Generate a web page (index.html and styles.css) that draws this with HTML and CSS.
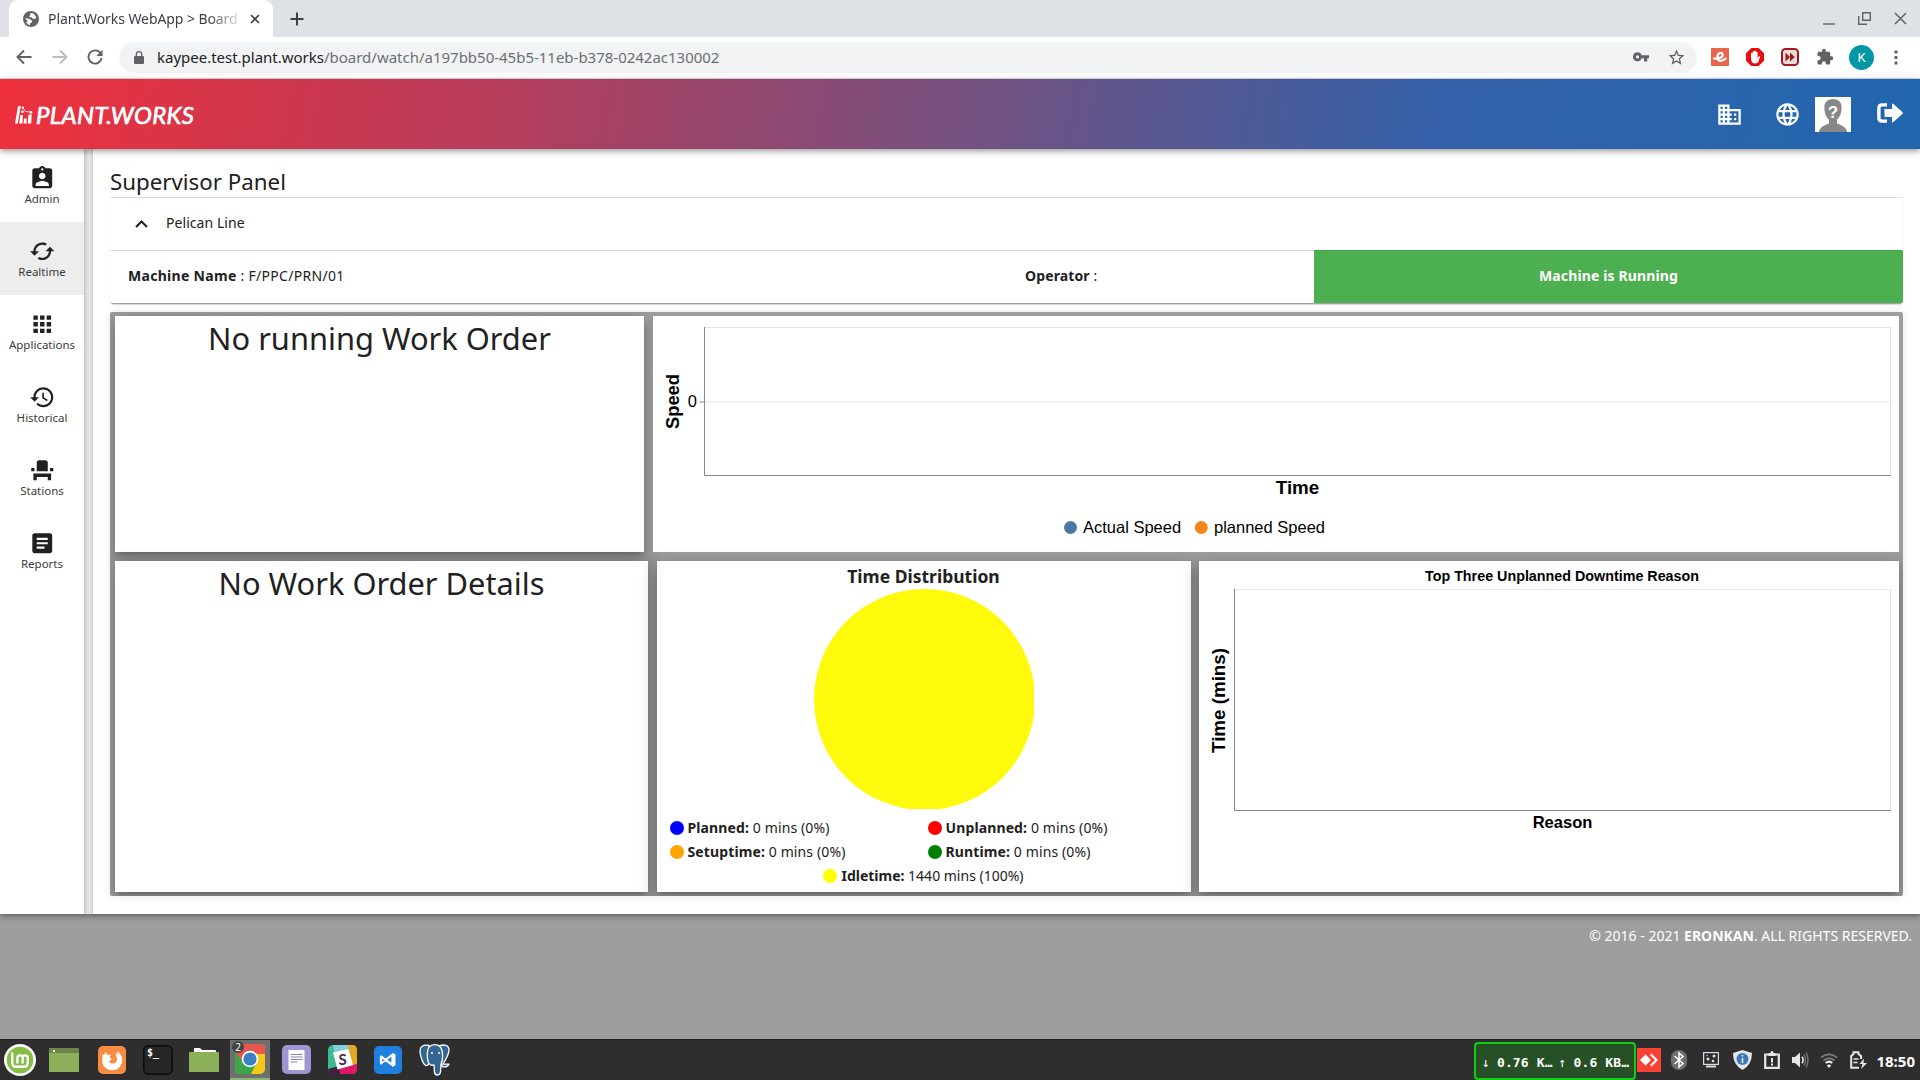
FILE: index.html
```html
<!DOCTYPE html>
<html lang="en">
<head>
<meta charset="utf-8">
<title>Plant.Works WebApp &gt; Board</title>
<link rel="stylesheet" href="styles.css">
</head>
<body>
<div class="screen">

<div class="tabstrip">
  <div class="tab">
    <svg class="tab-icon" viewBox="0 0 16 16"><circle cx="8" cy="8" r="8" fill="#5f6368"/><path d="M7 2.5 9.5 2l2 1.5 1.8 3-1.3 1.6-2-.2-1.2-1.6-2 .3-.6-1.5 1.3-.6zM2 7l3 .6 2.4 1 1.8 1.2-.6 1.7-1.4.7-.5 2L4.500 13 3 11l2-.5z" fill="#fff"/></svg>
    <span class="tab-title">Plant.Works WebApp &gt; Board</span>
    <svg class="tab-close" viewBox="0 0 10 10"><path d="M1 1l8 8M9 1 1 9" stroke="#3c4043" stroke-width="1.7"/></svg>
  </div>
  <svg class="new-tab" viewBox="0 0 14 14"><path d="M7 .5v13M.5 7h13" stroke="#3c4043" stroke-width="2"/></svg>
  <div class="window-buttons">
    <svg width="12" height="14" viewBox="0 0 12 14"><path d="M0 12h12" stroke="#5f6368" stroke-width="1.4"/></svg>
    <svg width="13" height="13" viewBox="0 0 13 13" fill="none" stroke="#5f6368" stroke-width="1.4"><path d="M4.700.7h7.600v7.600H4.700zM.7 4v8.300H9"/></svg>
    <svg width="13" height="13" viewBox="0 0 13 13"><path d="M1 1l11 11M12 1 1 12" stroke="#5f6368" stroke-width="1.5"/></svg>
  </div>
</div>

<div class="toolbar">
  <svg class="nav back" viewBox="0 0 16 16"><path d="M15.500 8H2M8 1.500 1.500 8 8 14.500"/></svg>
  <svg class="nav forward" viewBox="0 0 16 16"><path d="M.5 8H14M8 1.500 14.500 8 8 14.500"/></svg>
  <svg class="nav reload" viewBox="0 0 16 16"><path d="M13.700 4.500A6.600 6.600 0 1 0 14.600 9"/><path d="M15.500.8v6.200H9.300z" fill="#5f6368" stroke="none"/></svg>
  <div class="omnibox">
    <svg class="lock" viewBox="0 0 10 13"><path d="M1 5h8q1 0 1 1v6q0 1-1 1H1q-1 0-1-1V6q0-1 1-1z" fill="#5f6368"/><path d="M2.300 5.500V3.400a2.700 2.700 0 0 1 5.400 0v2.100" fill="none" stroke="#5f6368" stroke-width="1.300"/></svg>
    <span class="url"><b>kaypee.test.plant.works</b>/board/watch/a197bb50-45b5-11eb-b378-0242ac130002</span>
    <svg class="key" viewBox="0 0 16 10"><path d="M4.500.3a4.500 4.500 0 1 0 4.200 6H11v3.200h3.200V6.300H16v-3H8.700A4.500 4.500 0 0 0 4.500.3zm0 3a1.600 1.600 0 1 1 0 3.200 1.600 1.600 0 0 1 0-3.200z" fill="#5f6368" fill-rule="evenodd"/></svg>
    <svg class="star" viewBox="0 0 24 24"><path d="M22 9.240l-7.190-.62L12 2 9.190 8.630 2 9.240l5.460 4.730L5.820 21 12 17.270 18.180 21l-1.630-7.030L22 9.240zM12 15.400l-3.760 2.270 1-4.280-3.320-2.880 4.380-.38L12 6.100l1.710 4.040 4.380.38-3.320 2.880 1 4.280L12 15.400z" fill="#5f6368"/></svg>
  </div>
  <div class="extensions">
    <svg width="18" height="18" viewBox="0 0 18 18"><rect width="18" height="18" rx="1" fill="#e8674c"/><path d="M3 10.500c4.500.6 9-1.200 8.600-4.200-.4-2.600-5-1.600-5.200 2.600-.2 4.800 4.300 5 8.100 1.800" fill="none" stroke="#fff" stroke-width="2.200" stroke-linecap="round"/></svg>
    <svg width="18" height="18" viewBox="0 0 18 18"><path d="M5.300 0h7.400L18 5.300v7.400L12.700 18H5.300L0 12.700V5.300z" fill="#e90d10"/><path d="M5 9V5.200q.9-.9 1.600 0V3.600q.9-.9 1.700 0V3q.9-.8 1.700 0v1q.9-.7 1.600.2v6l1-1.600q1-.8 1.500.2L12 14.500q-3.500 2-6-.3Q5 12.500 5 9z" fill="#fff"/></svg>
    <svg width="18" height="18" viewBox="0 0 18 18"><rect x="1" y="1" width="16" height="16" rx="3.500" fill="#e9dcdc" stroke="#a3191c" stroke-width="2"/><path d="M4.500 4.500 9 9l-4.500 4.500zM9 4.500 13.800 9 9 13.500z" fill="#a3191c"/></svg>
    <svg width="18" height="18" viewBox="0 0 24 24"><path d="M20.500 11H19V7c0-1.100-.9-2-2-2h-4V3.500a2.500 2.500 0 0 0-5 0V5H4c-1.100 0-2 .9-2 2v3.800h1.500a2.700 2.700 0 0 1 0 5.400H2V20c0 1.100.9 2 2 2h3.800v-1.500a2.700 2.700 0 0 1 5.400 0V22H17c1.100 0 2-.9 2-2v-4h1.500a2.500 2.500 0 0 0 0-5z" fill="#5f6368"/></svg>
    <span class="profile">K</span>
    <svg width="4" height="15" viewBox="0 0 4 15" fill="#5f6368"><circle cx="2" cy="2" r="1.700"/><circle cx="2" cy="7.500" r="1.700"/><circle cx="2" cy="13" r="1.700"/></svg>
  </div>
</div>

<header class="app-header">
  <div class="brand">
    <svg width="18" height="18" viewBox="0 0 18 18"><path d="M3 0h2.800L2.800 17.500H0zM5.300 9h2.600L7.500 17.500H4.200zM9 12.500h2.700l-.3 5H8.600zM13.500 8.500h3.200l-.5 9H12.700z" fill="#fff"/><path d="M7.500 1.500 10.500 5.500 16.500 6" fill="none" stroke="#fff" stroke-width=".8"/><circle cx="7.800" cy="1.800" r="1.200" fill="#fff"/><circle cx="7.500" cy="5.800" r="1.300" fill="#fff"/><circle cx="16" cy="6.300" r="1.400" fill="#fff"/></svg>
    <span>PLANT.WORKS</span>
  </div>
  <div class="header-actions">
    <svg class="domain" viewBox="0 0 24 24"><path d="M12 7V3H2v18h20V7H12zM6 19H4v-2h2v2zm0-4H4v-2h2v2zm0-4H4V9h2v2zm0-4H4V5h2v2zm4 12H8v-2h2v2zm0-4H8v-2h2v2zm0-4H8V9h2v2zm0-4H8V5h2v2zm10 12h-8v-2h2v-2h-2v-2h2v-2h-2V9h8v10zm-2-8h-2v2h2v-2zm0 4h-2v2h2v-2z"/></svg>
    <svg class="globe" viewBox="0 0 24 24"><path d="M11.990 2C6.470 2 2 6.480 2 12s4.470 10 9.990 10C17.520 22 22 17.520 22 12S17.520 2 11.990 2zm6.930 6h-2.950c-.32-1.250-.78-2.450-1.380-3.560 1.840.63 3.370 1.910 4.330 3.560zM12 4.040c.83 1.200 1.480 2.530 1.910 3.960h-3.820c.43-1.430 1.080-2.760 1.910-3.960zM4.260 14C4.100 13.360 4 12.690 4 12s.1-1.360.26-2h3.380c-.08.66-.14 1.320-.14 2 0 .68.06 1.340.14 2H4.260zm.82 2h2.950c.32 1.250.78 2.450 1.380 3.560-1.840-.63-3.370-1.900-4.330-3.560zm2.950-8H5.080c.96-1.660 2.490-2.930 4.330-3.560C8.810 5.550 8.350 6.750 8.030 8zM12 19.960c-.83-1.200-1.480-2.530-1.910-3.960h3.820c-.43 1.430-1.080 2.760-1.910 3.960zM14.340 14H9.660c-.09-.66-.16-1.320-.16-2 0-.68.07-1.350.16-2h4.680c.09.65.16 1.320.16 2 0 .68-.07 1.340-.16 2zm.25 5.560c.6-1.110 1.060-2.310 1.380-3.560h2.950c-.96 1.650-2.490 2.930-4.330 3.560zM16.360 14c.08-.66.14-1.320.14-2 0-.68-.06-1.340-.14-2h3.380c.16.64.26 1.310.26 2s-.1 1.360-.26 2h-3.380z"/></svg>
    <svg class="avatar" viewBox="0 0 36 35"><rect width="36" height="35" fill="#fff"/><path d="M18 2c-5.500 0-9 3.500-8.600 9 0 5 1.800 9.500 4.600 11.500V26c-1 2-9.500 2.500-10 9h28c-.5-6.500-9-7-10-9v-3.500c2.800-2 4.600-6.500 4.600-11.500C27 5.500 23.500 2 18 2z" fill="#888"/><text x="18" y="20.500" text-anchor="middle" class="avatar-mark">?</text></svg>
    <svg class="logout" viewBox="0 0 26 20"><path d="M10 1.900H5Q1.900 1.900 1.900 5v10q0 3.100 3.100 3.100h5" fill="none" stroke="#fff" stroke-width="3.400"/><path d="M7.500 6H15V1.500q0-1.800 1.500-.6l9 8.300q.8.800 0 1.600l-9 8.300q-1.500 1.200-1.500-.6V14H7.500z" fill="#fff"/></svg>
  </div>
</header>

<div class="body">
  <nav class="sidebar">
    <a class="side-item"><svg viewBox="0 0 24 24"><path d="M19 3h-4.180C14.400 1.840 13.300 1 12 1c-1.300 0-2.400.84-2.820 2H5c-1.100 0-2 .9-2 2v14c0 1.100.9 2 2 2h14c1.100 0 2-.9 2-2V5c0-1.100-.9-2-2-2zm-7 0c.55 0 1 .45 1 1s-.45 1-1 1-1-.45-1-1 .45-1 1-1zm0 4c1.660 0 3 1.340 3 3s-1.340 3-3 3-3-1.340-3-3 1.340-3 3-3zm6 12H6v-1.400c0-2 4-3.100 6-3.100s6 1.100 6 3.100V19z"/></svg><span>Admin</span></a>
    <a class="side-item active"><svg viewBox="0 0 24 24"><path d="M19 8l-4 4h3c0 3.310-2.690 6-6 6-1.010 0-1.970-.25-2.800-.7l-1.460 1.460C8.970 19.540 10.430 20 12 20c4.420 0 8-3.580 8-8h3l-4-4zM6 12c0-3.310 2.690-6 6-6 1.010 0 1.970.25 2.800.7l1.460-1.460C15.030 4.460 13.570 4 12 4c-4.420 0-8 3.580-8 8H1l4 4 4-4H6z"/></svg><span>Realtime</span></a>
    <a class="side-item"><svg viewBox="0 0 24 24"><path d="M4 8h4V4H4v4zm6 12h4v-4h-4v4zm-6 0h4v-4H4v4zm0-6h4v-4H4v4zm6 0h4v-4h-4v4zm6-10v4h4V4h-4zm-6 4h4V4h-4v4zm6 6h4v-4h-4v4zm0 6h4v-4h-4v4z"/></svg><span>Applications</span></a>
    <a class="side-item"><svg viewBox="0 0 24 24"><path d="M13 3c-4.970 0-9 4.030-9 9H1l3.890 3.890.07.14L9 12H6c0-3.870 3.130-7 7-7s7 3.130 7 7-3.130 7-7 7c-1.930 0-3.680-.79-4.940-2.060l-1.420 1.420C8.270 19.990 10.510 21 13 21c4.970 0 9-4.030 9-9s-4.030-9-9-9zm-1 5v5l4.280 2.540.72-1.210-3.500-2.080V8H12z"/></svg><span>Historical</span></a>
    <a class="side-item"><svg viewBox="0 0 24 24"><path d="M4 18v3h3v-3h10v3h3v-6H4v3zm15-8h3v3h-3v-3zM2 10h3v3H2v-3zm15 3H7V5c0-1.100.9-2 2-2h6c1.100 0 2 .9 2 2v8z"/></svg><span>Stations</span></a>
    <a class="side-item"><svg viewBox="0 0 24 24"><path d="M19 3H5c-1.100 0-2 .9-2 2v14c0 1.100.9 2 2 2h14c1.100 0 2-.9 2-2V5c0-1.100-.9-2-2-2zm-5 14H7v-2h7v2zm3-4H7v-2h10v2zm0-4H7V7h10v2z"/></svg><span>Reports</span></a>
  </nav>

  <main class="content">
    <h1 class="page-title">Supervisor Panel</h1>
    <section class="line-panel">
      <div class="line-row">
        <svg class="chevron" viewBox="0 0 13 8"><path d="M1 7l5.500-5.500L12 7" fill="none" stroke="#212121" stroke-width="2"/></svg>
        <span>Pelican Line</span>
      </div>
      <div class="machine-row">
        <div class="machine-name"><b>Machine Name</b> : F/PPC/PRN/01</div>
        <div class="operator"><b>Operator</b> :</div>
        <div class="status">Machine is Running</div>
      </div>
    </section>

    <section class="board">
      <div class="board-row first">
        <article class="card raised"><h2>No running Work Order</h2></article>
        <article class="card">
          <svg class="chart" viewBox="0 0 1246 236">
            <path d="M51.500 11.500H1237.500V159M51.500 86H1237.500" class="grid"/>
            <path d="M51.500 11V159.500H1238M46.500 86h5" class="axis"/>
            <text x="-85.500" y="26" transform="rotate(-90)" text-anchor="middle" class="axis-title" textLength="55" lengthAdjust="spacingAndGlyphs">Speed</text>
            <text x="44" y="91" text-anchor="end" class="tick">0</text>
            <text x="644.500" y="178" text-anchor="middle" class="axis-title" textLength="43.500" lengthAdjust="spacingAndGlyphs">Time</text>
            <circle cx="417.500" cy="211.500" r="6.500" fill="#4c78a8"/>
            <text x="430" y="217" class="legend-label">Actual Speed</text>
            <circle cx="548.300" cy="211.500" r="6.500" fill="#f58518"/>
            <text x="561" y="217" class="legend-label">planned Speed</text>
          </svg>
        </article>
      </div>
      <div class="board-row second">
        <article class="card raised"><h2>No Work Order Details</h2></article>
        <article class="card raised distribution">
          <h3>Time Distribution</h3>
          <svg class="pie" viewBox="0 0 220 220"><circle cx="110.500" cy="110.500" r="110.500" fill="#fffa0b"/></svg>
          <ul class="legend">
            <li><i class="dot planned"></i><b>Planned:</b> 0 mins (0%)</li>
            <li><i class="dot unplanned"></i><b>Unplanned:</b> 0 mins (0%)</li>
            <li><i class="dot setup"></i><b>Setuptime:</b> 0 mins (0%)</li>
            <li><i class="dot run"></i><b>Runtime:</b> 0 mins (0%)</li>
            <li class="wide"><i class="dot idle"></i><b>Idletime:</b> 1440 mins (100%)</li>
          </ul>
        </article>
        <article class="card raised">
          <svg class="chart" viewBox="0 0 700 331">
            <text x="363" y="20" text-anchor="middle" class="chart-title" textLength="274" lengthAdjust="spacingAndGlyphs">Top Three Unplanned Downtime Reason</text>
            <path d="M35.500 28.500H691.500V249" class="grid"/>
            <path d="M35.500 28V249.500H692" class="axis"/>
            <text x="-139.500" y="26" transform="rotate(-90)" text-anchor="middle" class="axis-title" textLength="105" lengthAdjust="spacingAndGlyphs">Time (mins)</text>
            <text x="363.500" y="267" text-anchor="middle" class="axis-title small">Reason</text>
          </svg>
        </article>
      </div>
    </section>
  </main>
</div>

<footer class="footer"><span>© 2016 - 2021 <b>ERONKAN</b>. ALL RIGHTS RESERVED.</span></footer>

<div class="taskbar">
  <div class="launchers">
    <span class="launch mint"><svg width="32" height="32" viewBox="0 0 32 32"><circle cx="16" cy="16" r="16" fill="#fff"/><circle cx="16" cy="16" r="13.300" fill="#86be43"/><path d="M8.200 9.500v9q0 4.300 4.300 4.300h7q4.300 0 4.300-4.300V14a2.600 2.600 0 0 0-5.200 0v4.500m0-4.500a2.600 2.600 0 0 0-5.200 0v4.500" fill="none" stroke="#fff" stroke-width="2.400" stroke-linecap="round"/></svg></span>
    <span class="launch desk"><svg width="30" height="24" viewBox="0 0 30 24"><rect width="30" height="24" fill="#8cb05a"/><rect width="30" height="5" fill="#6a8547"/><rect x="4" y="2" width="2" height="2" fill="#fff"/></svg></span>
    <span class="launch"><svg width="28" height="28" viewBox="0 0 28 28"><rect width="28" height="28" rx="5" fill="#f98b43"/><path d="M4.500 8 6 9.200 7.500 6l2 3 3.500-.5-1.500 3 2.500 1.500-3 2.500q1 2.500 4.500 2 4-1 3.500-5.500L17 7l3 2-1-4q6.500 4 5 11.500Q22 24 14.500 24.300 6 24 4.300 16z" fill="#fff"/></svg></span>
    <span class="launch"><svg width="30" height="30" viewBox="0 0 30 30"><rect x=".7" y=".7" width="28.600" height="28.600" rx="5" fill="#262626" stroke="#0c0c0c" stroke-width="1.400"/><text x="4" y="11" class="prompt">$_</text></svg></span>
    <span class="launch"><svg width="30" height="24" viewBox="0 0 30 24"><path d="M5 5V1q0-1 1-1h5l2 2h13q1 0 1 1v3z" fill="#fff"/><rect y="4" width="30" height="20" rx="1" fill="#8cb05a"/></svg></span>
    <span class="launch running"><svg width="30" height="30" viewBox="0 0 30 30"><rect width="30" height="30" rx="5" fill="#f6c915"/><path d="M0 8v17q0 5 5 5h11l6-12-12-6z" fill="#3da54a"/><path d="M1 9V5q0-5 5-5h19q5 0 5 5v5H15L9 19z" fill="#e8574d"/><circle cx="15" cy="15" r="8.300" fill="#fff"/><circle cx="15" cy="15" r="6.600" fill="#3c7fc4"/></svg><em class="count">2</em></span>
    <span class="launch"><svg width="29" height="29" viewBox="0 0 29 29"><rect width="29" height="29" rx="5" fill="#9d96d2"/><rect x="6.500" y="5" width="16" height="20" fill="#fff"/><path d="M8.500 9.500h12M8.500 12h12M8.500 14.500h12M8.500 17h7" stroke="#8a84b8"/></svg></span>
    <span class="launch"><svg width="29" height="29" viewBox="0 0 29 29"><rect width="29" height="29" rx="5" fill="#3eb991"/><path d="M5 0h17l-3 8-12 3z" fill="#7ed0dd"/><path d="M20 0h4q5 0 5 5v16l-6-3z" fill="#e3a820"/><path d="M29 19v5q0 5-5 5H5l-3-3z" fill="#e01765"/><path d="M0 24l11-3 1 8H5q-5 0-5-5z" fill="#421f3c"/><path d="M5 7.500 20.500 4l4.500 16-15.500 4.500z" fill="#fff"/><text x="14.700" y="20" text-anchor="middle" class="slack-s">S</text></svg></span>
    <span class="launch"><svg width="28" height="28" viewBox="0 0 28 28"><rect width="28" height="28" rx="5" fill="#1f7fdd"/><path d="M7 10.500 18.500 19V8.500L7 17.500z" fill="none" stroke="#fff" stroke-width="2.200" stroke-linejoin="round"/><path d="m18 7 3.500 1.300v11L18 21z" fill="#fff"/></svg></span>
    <span class="launch"><svg width="31" height="32" viewBox="0 0 31 32"><g fill="#336791" stroke="#fff" stroke-width="1.300" stroke-linejoin="round"><path d="M10 1.500C4 0 .6 3 1 8c.5 5 3 12 5.500 13.500 2 1 3-1.500 4.500-3z"/><path d="M20 2c5-2 10-1 10 4 0 4-3.500 10-6 14l6 .2c-1 2.500-4 3-7 2.500z"/><path d="M10 3c3-3 8-3 11-.5C24 6 24.500 15 22 20l-.5 8c-.5 4-6 4-6 0L15 21c-3 1-5.500-1-6-4C8 12 8 6 10 3z"/></g><circle cx="13" cy="9" r="1" fill="#fff"/><circle cx="20" cy="9" r="1" fill="#fff"/></svg></span>
  </div>
  <div class="tray">
    <div class="netspeed"><i>↓</i><span>0.76 K…</span><i>↑</i><span>0.6 KB…</span></div>
    <svg width="24" height="24" viewBox="0 0 24 24"><rect width="24" height="24" fill="#fb4134"/><path d="M3 12l5.500-5.500L14 12l-5.500 5.500zM13 7l1.500-1.500L21 12l-6.500 6.500L13 17l5-5z" fill="#fff"/></svg>
    <svg class="t-bt" width="16" height="20" viewBox="0 0 16 20"><rect width="16" height="20" rx="8" fill="#6f6f6f"/><path d="M3.500 6 12 13.500 8 17V3l4 3.500L3.500 14" fill="none" stroke="#fff" stroke-width="1.500"/></svg>
    <svg class="t-scr" width="16" height="16" viewBox="0 0 16 16"><rect x=".6" y=".6" width="14.800" height="11.800" fill="#2e2e2e" stroke="#d8dde5" stroke-width="1.200"/><path d="M3 14.500h10" stroke="#d8dde5" stroke-width="2"/><g fill="#d8dde5"><circle cx="5" cy="7" r="1.500"/><circle cx="11" cy="4" r="1.500"/><circle cx="10" cy="9" r="1.300"/><circle cx="4" cy="3.500" r=".7"/></g></svg>
    <svg class="t-shield" width="19" height="20" viewBox="0 0 19 20"><path d="M9.500 0 19 3q0 12-9.500 17Q0 15 0 3z" fill="#e6e6e6"/><circle cx="9.500" cy="9" r="6" fill="#3d78bb"/><path d="M9.500 8v5M9.500 5v1.600" stroke="#dce9f6" stroke-width="1.700"/></svg>
    <svg class="t-clip" width="16" height="18" viewBox="0 0 16 18"><path d="M1.200 3.500h13.600v13.300H1.200z" fill="none" stroke="#e8e8e8" stroke-width="2.200"/><path d="M4.500 5V2h2l.7-2h1.600l.7 2h2v3zM7 7h2v4.500H7zM7 12.500h2v2H7z" fill="#e8e8e8"/></svg>
    <svg class="t-vol" width="17" height="16" viewBox="0 0 17 16"><path d="M0 5h3l5-4.500v15L3 11H0z" fill="#e8e8e8"/><path d="M10 4.800q2.200 3.200 0 6.400" fill="none" stroke="#e8e8e8" stroke-width="1.600"/><path d="M12 2.500q3 5.500 0 11M14 .5q4 7.500 0 15" fill="none" stroke="#777" stroke-width="1.400"/></svg>
    <svg class="t-wifi" width="18" height="15" viewBox="0 0 18 15" fill="none"><path d="M1 4.500q8-6.500 16 0M3.500 7.500q5.500-4.500 11 0" stroke="#777" stroke-width="2"/><path d="M5.700 10q3.300-2.700 6.600 0" stroke="#eee" stroke-width="2"/><path d="M9 15l-2.200-2.500q2.200-1.800 4.400 0z" fill="#eee"/></svg>
    <svg class="t-bat" width="17" height="18" viewBox="0 0 17 18"><path d="M9 16.800H1.200V5L3.500 3V1.200h5V3L11 5v3" fill="none" stroke="#e8e8e8" stroke-width="2"/><path d="M3.500 8h5M3.500 11.500h4" stroke="#e8e8e8" stroke-width="1.600"/><path d="M14 7.500 9.500 13h3l-1.500 5 6-6h-3.500z" fill="#e8e8e8"/></svg>
    <span class="clock">18:50</span>
  </div>
</div>

</div>
</body>
</html>
```
FILE: styles.css
```css
* { box-sizing: border-box; }
body { margin: 0; font-family: "Noto Sans", sans-serif; font-size: 14px; color: #212121; }
h1, h2, h3, ul { margin: 0; padding: 0; font-weight: 400; list-style: none; }
svg { display: block; flex: none; }
.screen { width: 1920px; height: 1080px; display: flex; flex-direction: column; overflow: hidden; background: #9e9e9e; }

/* browser chrome */
.tabstrip { flex: none; height: 37px; display: flex; align-items: center; background: #dee1e6; padding-left: 9px; }
.tab { width: 264px; height: 37px; background: #fff; border-radius: 9px 9px 0 0; display: flex; align-items: center; padding-left: 14px; }
.tab-icon { width: 16px; height: 16px; }
.tab-title { width: 193px; margin-left: 9px; white-space: nowrap; font-size: 14px; letter-spacing: -.08px; color: #3c4043; -webkit-mask-image: linear-gradient(90deg, #000 83%, transparent 102%); mask-image: linear-gradient(90deg, #000 83%, transparent 102%); }
.tab-close { width: 10px; height: 10px; margin-left: 9px; }
.new-tab { width: 14px; height: 14px; margin-left: 17px; }
.window-buttons { margin-left: auto; margin-right: 13px; display: flex; align-items: center; gap: 23px; }
.toolbar { flex: none; height: 42px; background: #fff; border-bottom: 1px solid #d5d7da; display: flex; align-items: center; padding: 0 0 1px 16px; }
.nav { width: 16px; height: 16px; fill: none; stroke: #5f6368; stroke-width: 1.9; }
.forward { margin-left: 20px; stroke: #babcbe; }
.reload { margin-left: 19px; }
.omnibox { width: 1578px; height: 31px; margin-left: 16px; border-radius: 16px; background: #f1f3f4; display: flex; align-items: center; padding: 0 11px 0 15px; }
.lock { width: 10px; height: 13px; }
.url { margin-left: 13px; font-size: 15px; letter-spacing: -.01px; color: #6b6f73; white-space: nowrap; }
.url b { font-weight: 400; color: #202124; }
.key { width: 16px; height: 10px; margin-left: auto; }
.star { width: 19px; height: 19px; margin-left: 18px; }
.extensions { display: flex; align-items: center; gap: 17px; margin-left: 14px; }
.profile { width: 25px; height: 25px; margin: 0 3px 0 -2px; border-radius: 50%; background: #0097a7; color: #fff; font: 13px/25px Roboto, sans-serif; text-align: center; }

/* application header */
.app-header { flex: none; height: 70px; position: relative; z-index: 2; display: flex; align-items: center; justify-content: space-between; padding: 0 17px 0 15px; background: linear-gradient(100deg, #ee303c 0%, #b93c5a 25%, #75507f 50%, #3361a9 75%, #2166ae 100%); box-shadow: 0 2px 4px -1px rgba(0,0,0,.2), 0 4px 5px rgba(0,0,0,.14), 0 1px 10px rgba(0,0,0,.12); }
.brand { display: flex; align-items: center; gap: 3px; padding-top: 1px; color: #fff; font: italic 400 24px/30px Lato, sans-serif; letter-spacing: .35px; -webkit-text-stroke: .7px #fff; }
.header-actions { display: flex; align-items: center; fill: #fff; }
.domain { width: 27px; height: 27px; margin-top: 1px; }
.globe { width: 27px; height: 27px; margin-left: 31px; }
.avatar { width: 36px; height: 35px; margin-left: 14px; }
.avatar-mark { font: 700 17px "Liberation Sans", sans-serif; fill: #fff; }
.logout { width: 26px; height: 20px; margin: 0 0 3px 26px; }

/* sidebar and content */
.body { flex: none; height: 765px; display: flex; background: #e4e4e4; box-shadow: 0 2px 6px rgba(0,0,0,.35); position: relative; }
.sidebar { width: 84px; background: #fff; box-shadow: 1px 0 3px rgba(0,0,0,.2); }
.side-item { height: 73px; padding-top: 16px; display: flex; flex-direction: column; align-items: center; font-size: 11.5px; line-height: 16px; color: #3a3a3a; }
.side-item.active { background: #ededed; }
.side-item svg { width: 26.500px; height: 26.500px; fill: #212121; }
.side-item span { margin-top: -1px; }
.content { flex: 1; margin-left: 9px; background: #fff; padding: 17px 17px 0; box-shadow: 0 0 3px rgba(0,0,0,.2); }
.page-title { height: 32px; border-bottom: 1px solid #e0e0e0; font-size: 22.300px; line-height: 32px; }
.line-panel { box-shadow: 0 2px 2px -1px rgba(0,0,0,.5); border-radius: 0 0 3px 3px; }
.line-row { height: 52px; display: flex; align-items: center; padding: 0 0 3px 25px; letter-spacing: .06px; }
.chevron { width: 13px; height: 8px; margin: 2px 18px 0 0; }
.machine-row { height: 53px; display: grid; grid-template-columns: 897px 307px 589px; align-items: center; border-top: 1px solid #e0e0e0; }
.machine-name, .operator { padding: 0 0 3px 18px; }
.machine-name { letter-spacing: .3px; }
.operator { letter-spacing: .12px; }
.status { margin-top: -1px; height: 53px; line-height: 50px; letter-spacing: .13px; text-align: center; background: #4caf50; color: #fff; font-weight: 700; border-top: 1px solid #46a04a; border-radius: 0 2px 2px 0; }
.board { margin-top: 9px; height: 584px; padding: 4px 4px 4px 5px; background: #9e9e9e; border-radius: 2px; box-shadow: 0 0 8px rgba(0,0,0,.1); overflow: hidden; }
.board-row { display: grid; }
.first { grid-template-columns: 529px 1246px; gap: 9px; height: 236px; }
.second { grid-template-columns: 533px 534px 700px; column-gap: 8.500px; margin-top: 9px; height: 331px; }
.card { background: #fff; }
.raised { box-shadow: 0 8px 17px 2px rgba(0,0,0,.14), 0 3px 14px 2px rgba(0,0,0,.12), 0 5px 5px -3px rgba(0,0,0,.2); }
.card h2 { font-size: 30.800px; line-height: 44px; text-align: center; }
.chart { width: 100%; height: 100%; font-family: "Liberation Sans", sans-serif; }
.grid { fill: none; stroke: #e4e4e4; }
.axis { fill: none; stroke: #888; }
.axis-title { font-size: 18px; font-weight: 700; }
.axis-title.small { font-size: 16.500px; }
.chart-title { font-size: 14.500px; font-weight: 700; }
.tick, .legend-label { font-size: 16.500px; }
.distribution { display: flex; flex-direction: column; align-items: center; }
.distribution h3 { font-size: 17.500px; font-weight: 700; line-height: 28px; height: 28px; padding-top: 1px; }
.pie { width: 220px; height: 220px; }
.legend { align-self: stretch; margin-top: 7px; padding-left: 13px; display: grid; grid-template-columns: 258px 1fr; line-height: 24px; letter-spacing: .12px; }
.legend li { display: flex; align-items: center; white-space: pre; }
.legend .wide { grid-column: 1 / 3; justify-content: center; margin-left: -13px; letter-spacing: 0; }
.dot { width: 14px; height: 14px; border-radius: 50%; margin-right: 4px; }
.planned { background: #00f; }
.unplanned { background: #f00; }
.setup { background: orange; }
.run { background: green; }
.idle { background: #ff0; }
.footer { flex: 1; padding: 12px 8px 0; text-align: right; color: #fff; line-height: 20px; }

/* desktop panel */
.taskbar { flex: none; height: 41px; background: #2e2e2e; border-top: 1px solid #1c1c1c; display: flex; justify-content: space-between; position: relative; }
.launchers { display: flex; }
.launch { width: 46px; display: flex; align-items: center; justify-content: center; position: relative; padding-bottom: 1px; }
.launch.mint { width: 40px; }
.launch.desk { width: 48px; margin-right: 1px; }
.launch.running { width: 40px; margin: 0 3px; background: #6f6f6f; border-bottom: 2px solid #8fb573; padding: 0; }
.count { position: absolute; left: 2px; top: 1px; width: 12px; height: 12px; border-radius: 50%; background: #444; color: #fff; font: 10px/12px "Noto Sans", sans-serif; text-align: center; }
.prompt { font: 700 10px "DejaVu Sans Mono", monospace; fill: #fff; }
.slack-s { font: 700 15px Lato, sans-serif; fill: #472a49; }
.tray { display: flex; align-items: center; padding-right: 5px; }
.netspeed { width: 162px; height: 38px; align-self: flex-end; display: flex; align-items: center; padding: 2px 0 0 6px; background: #265026; border: 2px solid #11cc11; border-radius: 4px; margin-right: 1px; color: #fff; font: 700 13px "DejaVu Sans Mono", monospace; letter-spacing: .12px; white-space: nowrap; }
.netspeed i { font-style: normal; font-weight: 400; margin-right: 7px; }
.netspeed span + i { margin-left: 6px; }
.t-bt { margin-left: 10px; }
.t-scr { margin-left: 16px; }
.t-shield { margin-left: 14px; }
.t-clip { margin-left: 12px; }
.t-vol { margin-left: 12px; }
.t-wifi { margin-left: 11px; }
.t-bat { margin-left: 12px; }
.clock { width: 39px; margin-left: 9px; padding-top: 2px; color: #fff; font-size: 15px; font-weight: 700; text-align: right; white-space: nowrap; }
```
